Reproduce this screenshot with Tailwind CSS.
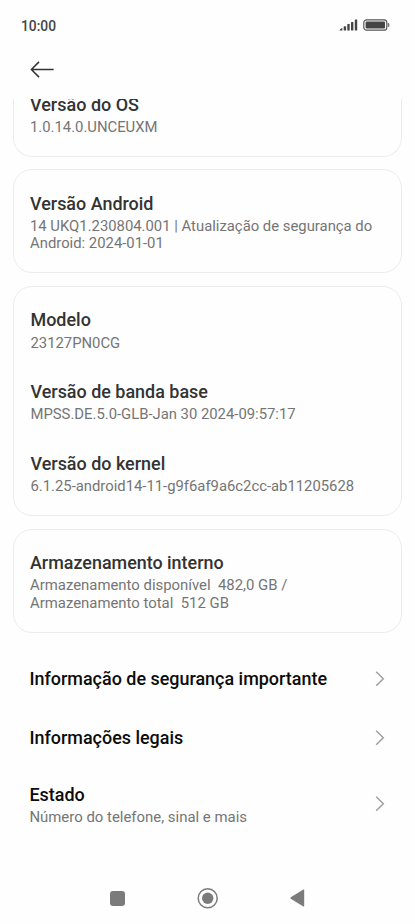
<!DOCTYPE html>
<html lang="pt">
<head>
<meta charset="utf-8">
<title>Sobre o telefone</title>
<script src="https://cdn.jsdelivr.net/npm/@tailwindcss/browser@4"></script>
</head>
<body class="bg-[#fefefe] font-[Roboto,sans-serif]">
<div class="flex h-[924px] w-[415px] flex-col overflow-hidden">
  <header class="h-[99px] shrink-0">
    <div class="flex h-[50px] items-center justify-between pl-[21px] pr-[25px]">
      <span class="text-[13.8px] font-medium leading-[20px] text-[#444] mt-[2px]">10:00</span>
      <div class="flex items-center gap-[5px]">
        <svg width="19" height="12" viewBox="0 0 19 12" fill="#444"><path d="M.6 11.5q0-1.6 2.8-2.5v2.5z"/><rect x="4.7" y="7.2" width="2.4" height="4.3" rx=".6"/><rect x="8.3" y="5" width="2.4" height="6.5" rx=".6"/><rect x="12" y="3" width="2.4" height="8.5" rx=".6"/><rect x="15.8" y="0.5" width="2.4" height="11" rx=".6"/></svg>
        <svg width="27" height="12" viewBox="0 0 27 12"><rect x="0.8" y="0.8" width="23" height="10.4" rx="2.8" fill="none" stroke="#555" stroke-width="1.2"/><rect x="2.6" y="2.6" width="19.4" height="6.8" rx="1" fill="#444"/><path d="M24.8 4h.6q1 .2 1 1v2q0 .8-1 1h-.6z" fill="#777"/></svg>
      </div>
    </div>
    <svg class="ml-[30px] mt-[11px]" width="25" height="17" viewBox="0 0 25 17" fill="none" stroke="#333" stroke-width="1.5"><path d="M23.6 8.5H1.4M9 .9 1.4 8.5 9 16.1"/></svg>
  </header>

  <main class="flex flex-1 flex-col overflow-hidden px-[13px]">
    <section class="h-[58px] w-[389px] shrink-0 rounded-b-[19px] border border-t-0 border-[#ececec] pl-[16px]">
      <h2 class="-mt-[6px] text-[18px] font-medium leading-[24px] text-[#333]">Versão do OS</h2>
      <p class="mt-[2px] text-[14.83px] leading-[17.4px] text-[#757575]">1.0.14.0.UNCEUXM</p>
    </section>

    <section class="mt-[12px] h-[104px] w-[389px] shrink-0 rounded-[19px] border border-[#ececec] pl-[16px] pt-[22px]">
      <h2 class="text-[17.95px] font-medium leading-[24px] text-[#333]">Versão Android</h2>
      <p class="mt-[2px] text-[14.85px] leading-[17.4px] text-[#757575]">14 UKQ1.230804.001 | Atualização de segurança do<br>Android: 2024-01-01</p>
    </section>

    <section class="mt-[13px] flex h-[230px] w-[389px] shrink-0 flex-col gap-[27.7px] rounded-[19px] border border-[#ececec] pl-[16.5px] pt-[21px]">
      <div>
        <h2 class="text-[17.95px] font-medium leading-[24px] text-[#333]">Modelo</h2>
        <p class="mt-[2.7px] text-[14.83px] leading-[17.4px] text-[#757575]">23127PN0CG</p>
      </div>
      <div>
        <h2 class="text-[17.95px] font-medium leading-[24px] text-[#333]">Versão de banda base</h2>
        <p class="mt-[2.7px] text-[14.83px] leading-[17.4px] text-[#757575]">MPSS.DE.5.0-GLB-Jan 30 2024-09:57:17</p>
      </div>
      <div>
        <h2 class="text-[17.95px] font-medium leading-[24px] text-[#333]">Versão do kernel</h2>
        <p class="mt-[2.7px] text-[14.83px] leading-[17.4px] text-[#757575]">6.1.25-android14-11-g9f6af9a6c2cc-ab11205628</p>
      </div>
    </section>

    <section class="mt-[13px] h-[104px] w-[389px] shrink-0 rounded-[19px] border border-[#ececec] pl-[16px] pt-[21px]">
      <h2 class="text-[17.92px] font-medium leading-[24px] text-[#333]">Armazenamento interno</h2>
      <p class="mt-[2.2px] whitespace-pre text-[14.9px] leading-[17.4px] text-[#757575]">Armazenamento disponível  482,0 GB /<br>Armazenamento total  512 GB</p>
    </section>

    <nav class="mt-[16px] flex flex-col pl-[16.4px] pr-[17px]">
      <a class="flex h-[59px] items-center justify-between">
        <span class="text-[17.95px] font-medium leading-[24px] text-[#0c0c0c]">Informação de segurança importante</span>
        <svg width="10" height="16" viewBox="0 0 10 16" fill="none" stroke="#a0a0a0" stroke-width="1.5"><path d="M1.2 .8 8.3 7.8 1.2 14.8"/></svg>
      </a>
      <a class="flex h-[59px] items-center justify-between">
        <span class="text-[17.95px] font-medium leading-[24px] text-[#0c0c0c]">Informações legais</span>
        <svg width="10" height="16" viewBox="0 0 10 16" fill="none" stroke="#a0a0a0" stroke-width="1.5"><path d="M1.2 .8 8.3 7.8 1.2 14.8"/></svg>
      </a>
      <a class="flex h-[74px] items-center justify-between">
        <span class="pt-[2px]">
          <span class="block text-[17.95px] font-medium leading-[24px] text-[#0c0c0c]">Estado</span>
          <span class="mt-[2px] block text-[14.93px] leading-[17.4px] text-[#757575]">Número do telefone, sinal e mais</span>
        </span>
        <svg width="10" height="16" viewBox="0 0 10 16" fill="none" stroke="#a0a0a0" stroke-width="1.5"><path d="M1.2 .8 8.3 7.8 1.2 14.8"/></svg>
      </a>
    </nav>
  </main>

  <footer class="flex h-[52px] shrink-0 items-center justify-between pl-[110px] pr-[110px]">
    <span class="h-[15px] w-[15px] rounded-[3px] bg-[#7b7b7b]"></span>
    <svg width="22" height="22" viewBox="0 0 22 22"><circle cx="10.7" cy="11.2" r="9.5" fill="none" stroke="#7b7b7b" stroke-width="1.5"/><circle cx="10.7" cy="11.2" r="5.7" fill="#7b7b7b"/></svg>
    <svg width="15" height="18" viewBox="0 0 15 18" fill="#7b7b7b"><path d="M.8 8.3 13.4.6q.8-.4.8.5v15.8q0 .9-.8.5L.8 9.7Q0 9 .8 8.3z"/></svg>
  </footer>
</div>
</body>
</html>
